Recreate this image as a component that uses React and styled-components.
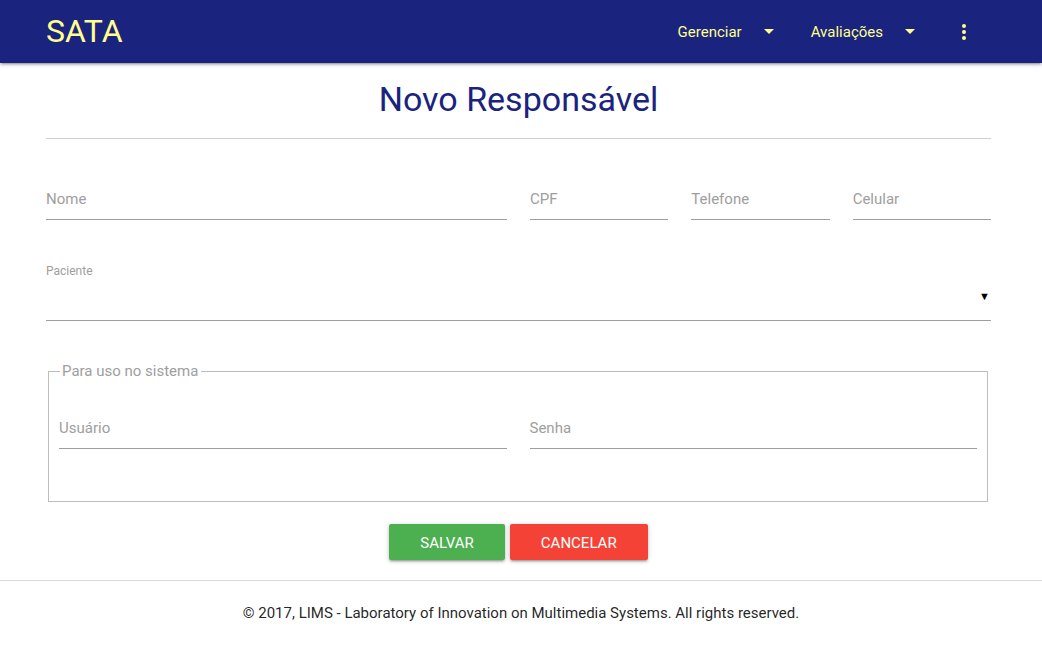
import React from "react";
import styled, { createGlobalStyle } from "styled-components";

const GlobalStyle = createGlobalStyle`
  html, body {
    margin: 0;
    padding: 0;
    background: #fff;
    font-family: Roboto, "Liberation Sans", sans-serif;
    color: rgba(0, 0, 0, 0.87);
  }
  * {
    box-sizing: border-box;
  }
`;

const Navbar = styled.nav`
  height: 63px;
  background-color: #1a237e;
  display: flex;
  align-items: center;
  padding: 0 66px 0 46px;
  box-shadow: 0 2px 2px 0 rgba(0, 0, 0, 0.14), 0 3px 1px -2px rgba(0, 0, 0, 0.12),
    0 1px 5px 0 rgba(0, 0, 0, 0.2);
  position: relative;
  z-index: 2;
`;

const Brand = styled.div`
  font-size: 32px;
  color: #ffff8d;
  flex: 1;
  line-height: 1;
  margin-top: -2px;
`;

const NavMenu = styled.ul`
  list-style: none;
  margin: 0;
  padding: 0;
  display: flex;
  align-items: center;
  gap: 37px;
`;

const NavItem = styled.li`
  display: flex;
  align-items: center;
  gap: 22px;
  font-size: 15px;
  color: #ffff8d;
`;

const Main = styled.main`
  width: 945px;
  margin-left: 46px;
`;

const Title = styled.h1`
  margin: 16px 0 0;
  font-size: 34px;
  font-weight: 400;
  line-height: 40px;
  color: #1a237e;
  text-align: center;
`;

const Divider = styled.hr`
  margin: 19px 0 0;
  border: 0;
  border-top: 1px solid #cfcfcf;
`;

const Row = styled.div`
  display: grid;
  grid-template-columns: repeat(${(p) => p.cols || 12}, 1fr);
  column-gap: 23px;
  margin-top: ${(p) => p.top || 0}px;
`;

const Field = styled.div`
  grid-column: span ${(p) => p.span || 1};
  padding: 14px 0 10px;
  border-bottom: 1px solid #9e9e9e;
`;

const Label = styled.label`
  display: block;
  font-size: 15px;
  line-height: 20px;
  color: #9e9e9e;
`;

const SelectBlock = styled.div`
  margin-top: 40px;
`;

const SmallLabel = styled.label`
  display: block;
  font-size: 12px;
  line-height: 22px;
  color: #9e9e9e;
`;

const SelectBox = styled.div`
  height: 39px;
  display: flex;
  align-items: center;
  justify-content: flex-end;
  padding: 0 1px 10px 0;
  border-bottom: 1px solid #9e9e9e;
  font-size: 11px;
  color: #000;
`;

const Fieldset = styled.fieldset`
  margin: 40px 3px 0 2px;
  padding: 0 10px 52px;
  border: 1px solid #bdbdbd;
  min-width: 0;
`;

const Legend = styled.legend`
  padding: 0 3px 0 2px;
  margin-left: 1px;
  font-size: 15px;
  line-height: 20px;
  color: #9e9e9e;
`;

const Actions = styled.div`
  display: flex;
  justify-content: center;
  gap: 5px;
  margin-top: 22px;
`;

const Button = styled.button`
  height: 36px;
  padding: 0 31px;
  border: none;
  border-radius: 2px;
  background-color: ${(p) => p.color};
  color: #fff;
  font-family: Roboto, "Liberation Sans", sans-serif;
  font-size: 15px;
  line-height: 38px;
  text-transform: uppercase;
  cursor: pointer;
  box-shadow: 0 2px 2px 0 rgba(0, 0, 0, 0.14), 0 3px 1px -2px rgba(0, 0, 0, 0.12),
    0 1px 5px 0 rgba(0, 0, 0, 0.2);
`;

const Footer = styled.footer`
  margin-top: 20px;
  border-top: 1px solid #d9d9d9;
  padding-top: 22px;
  text-align: center;
  font-size: 15px;
  line-height: 20px;
  color: rgba(0, 0, 0, 0.87);
`;

const Caret = () => (
  <svg width="10" height="5" viewBox="0 0 10 5">
    <path d="M0 0 L10 0 L5 5 Z" fill="#ffff8d" />
  </svg>
);

const Kebab = () => (
  <svg width="24" height="24" viewBox="0 0 24 24">
    <circle cx="12" cy="6" r="2" fill="#ffff8d" />
    <circle cx="12" cy="12" r="2" fill="#ffff8d" />
    <circle cx="12" cy="18" r="2" fill="#ffff8d" />
  </svg>
);

export default function App() {
  return (
    <>
      <GlobalStyle />
      <Navbar>
        <Brand>SATA</Brand>
        <NavMenu>
          <NavItem>
            Gerenciar <Caret />
          </NavItem>
          <NavItem>
            Avaliações <Caret />
          </NavItem>
          <NavItem>
            <Kebab />
          </NavItem>
        </NavMenu>
      </Navbar>
      <Main>
        <Title>Novo Responsável</Title>
        <Divider />
        <Row top={36}>
          <Field span={6}>
            <Label>Nome</Label>
          </Field>
          <Field span={2}>
            <Label>CPF</Label>
          </Field>
          <Field span={2}>
            <Label>Telefone</Label>
          </Field>
          <Field span={2}>
            <Label>Celular</Label>
          </Field>
        </Row>
        <SelectBlock>
          <SmallLabel>Paciente</SmallLabel>
          <SelectBox>▼</SelectBox>
        </SelectBlock>
        <Fieldset>
          <Legend>Para uso no sistema</Legend>
          <Row cols={2} top={23}>
            <Field>
              <Label>Usuário</Label>
            </Field>
            <Field>
              <Label>Senha</Label>
            </Field>
          </Row>
        </Fieldset>
        <Actions>
          <Button color="#4caf50">Salvar</Button>
          <Button color="#f44336">Cancelar</Button>
        </Actions>
      </Main>
      <Footer>© 2017, LIMS - Laboratory of Innovation on Multimedia Systems. All rights reserved.</Footer>
    </>
  );
}
